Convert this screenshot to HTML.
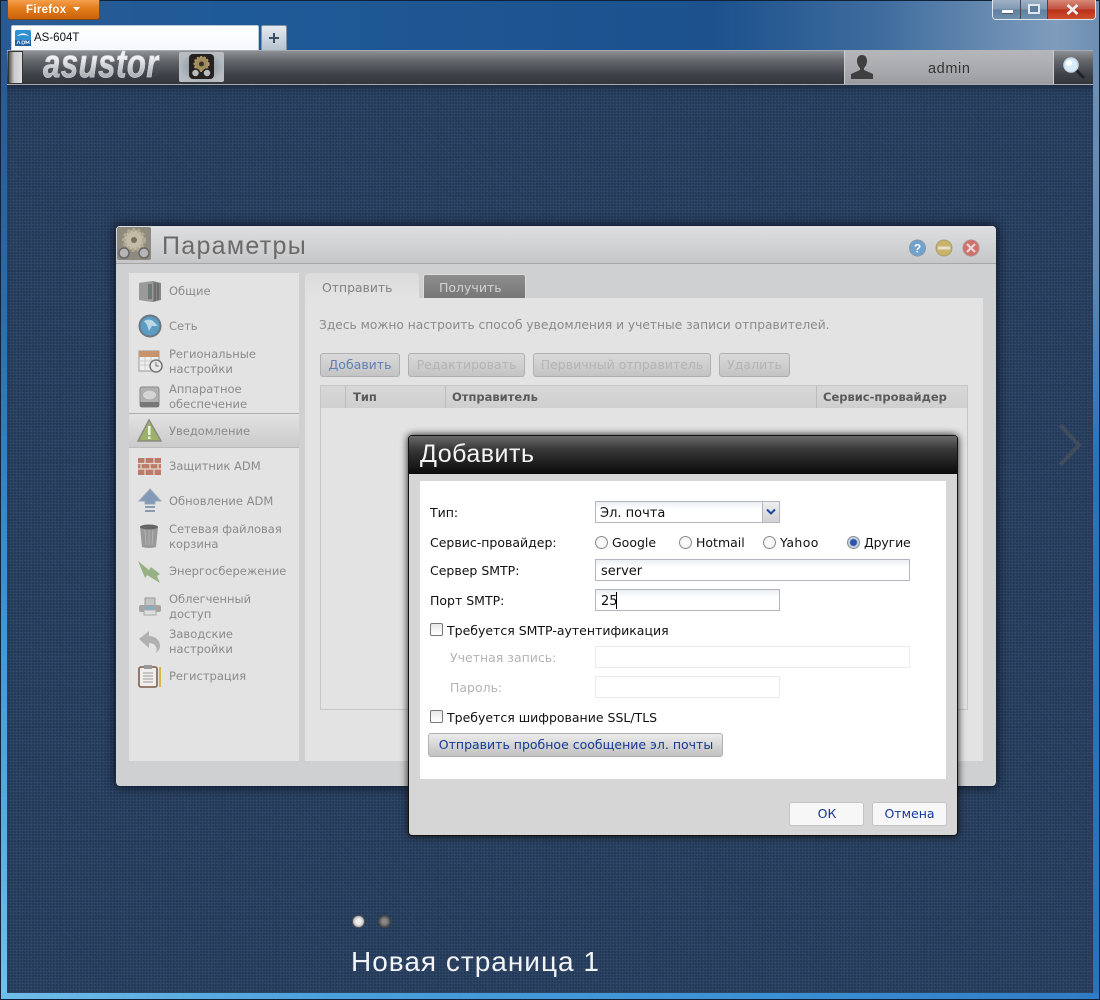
<!DOCTYPE html>
<html lang="ru"><head><meta charset="utf-8"><title>AS-604T</title>
<style>
html,body{margin:0;padding:0}
body{width:1100px;height:1000px;overflow:hidden;position:relative;background:#1b4d87;font-family:"DejaVu Sans","Liberation Sans",sans-serif;font-size:12px}
div,span,svg{position:absolute;box-sizing:border-box}
.t{white-space:nowrap}
.side{color:#8a8a8a;font-size:11.5px;line-height:15px;left:169px;white-space:nowrap}
.lb{color:#111;font-size:12.5px;white-space:nowrap;line-height:16px}
.dis{color:#b4b4b4}
.inp{background:linear-gradient(#eceef1,#fff 7px);border:1px solid #b3b5c6;height:22px;font-size:13px;color:#111;padding:4px 0 0 5px;line-height:16px}
.inpd{background:#fff;border:1px solid #ececec;height:22px}
.btn{height:24px;border:1px solid #b0b0b0;border-radius:3px;background:linear-gradient(#d9d9d9,#c4c4c4);font-size:12.5px;text-align:center;line-height:21px;white-space:nowrap}
.hd{top:386px;height:22px;font-weight:bold;color:#5a5a5a;font-size:11.5px;line-height:22px;white-space:nowrap}
.rad{width:13px;height:13px;border-radius:50%;border:1px solid #8a8a8a;background:radial-gradient(#fff,#eee);top:536px}
.cb{width:13px;height:13px;border:1px solid #777;border-radius:2px;background:linear-gradient(#e8e8e8,#fff);left:430px}
.sv{left:136px;width:28px;height:28px}
</style></head><body>

<!-- glass frame -->
<div style="left:0;top:0;width:1100px;height:1000px;background:linear-gradient(90deg,#2a5a93 0,#1f5a98 20%,#1c518d 65%,#3e6c9e 80%,#7f9cbc 96%,#6d8fb3 100%);border:1px solid #0f2238"></div>
<div style="left:1px;top:85px;width:6px;height:914px;background:linear-gradient(#2a5a93,#2a6aa8 22%,#3f97d6 60%,#72c0ea)"></div>
<div style="left:1093px;top:85px;width:6px;height:914px;background:linear-gradient(#6d8fb3,#5f88b4 20%,#2b74bd 40%,#2a72bc)"></div>
<div style="left:1px;top:993px;width:1098px;height:6px;background:linear-gradient(90deg,#6fbde8,#4aa0dc 30%,#3a90d4 70%,#2f7cc4)"></div>

<!-- Firefox button -->
<div style="left:7px;top:0;width:93px;height:20px;background:linear-gradient(#f4a04c,#e37c1a 45%,#c9610c);border:1px solid #7a4a1c;border-top:0;border-radius:0 0 3px 3px"></div>
<div class="t" style="left:26px;top:2px;color:#fff;font:bold 11.5px/16px 'Liberation Sans',sans-serif;letter-spacing:.3px">Firefox</div>
<svg style="left:72px;top:6px" width="9" height="6"><path d="M1 1h7L4.500 5z" fill="#fff"/></svg>

<!-- window controls -->
<div style="left:992px;top:0;width:104px;height:20px;border:1px solid #dfe8f0;border-top:0;border-radius:0 0 4px 4px;overflow:hidden;background:#445">
 <div style="left:0;top:0;width:27px;height:19px;background:linear-gradient(#9fb2c6 0,#7f98b2 48%,#5f7f9f 52%,#6f8fae)"></div>
 <div style="left:28px;top:0;width:26px;height:19px;background:linear-gradient(#9fb2c6 0,#7f98b2 48%,#5f7f9f 52%,#6f8fae)"></div>
 <div style="left:55px;top:0;width:48px;height:19px;background:linear-gradient(#d98a78 0,#c25040 48%,#b83018 52%,#d05030)"></div>
 <div style="left:9px;top:10px;width:11px;height:4px;background:#fff;border:1px solid #4a5a6a;border-width:0 0 1px 0"></div>
 <div style="left:35px;top:4px;width:12px;height:10px;border:2px solid #dfe6ee;background:#5f7f9f"></div>
 <svg style="left:73px;top:4px" width="13" height="11"><path d="M1.500 1l10 9M11.500 1l-10 9" stroke="#eeeeee" stroke-width="2.800"/></svg>
</div>

<!-- tab -->
<div style="left:11px;top:25px;width:248px;height:25px;background:linear-gradient(#fff,#f6f9fd);border-radius:2px 2px 0 0;border:1px solid #b8c8d8;border-bottom:0"></div>
<svg style="left:15px;top:30px" width="16" height="16"><rect width="16" height="16" rx="2" fill="#2f8fd0"/><rect y="10" width="16" height="6" fill="#1d5f9f"/><path d="M2 6q6-5 12 0q-6-2-12 0z" fill="#fff"/><path d="M2 14l1-3h1l1 3M7 11v3h2l1-2-1-1zM11 14v-3l1.500 2 1.500-2v3" stroke="#fff" fill="none" stroke-width=".8"/></svg>
<div class="t" style="left:34px;top:30px;color:#111;font:11.5px/16px 'Liberation Sans',sans-serif;letter-spacing:0">AS-604T</div>
<div style="left:261px;top:25px;width:26px;height:25px;background:linear-gradient(#e6ebf0,#b5c3d0);border:1px solid #7f93a8;border-bottom:0;border-radius:2px 2px 0 0"></div>
<svg style="left:268px;top:32px" width="12" height="12"><path d="M1 6h10M6 1v10" stroke="#3a4d60" stroke-width="2"/></svg>

<!-- app bar -->
<div style="left:7px;top:50px;width:1086px;height:35px;background:linear-gradient(#8d9094,#62656a 30%,#3c4047 75%,#34373c);border-top:1px solid #a5aab0;border-bottom:1px solid #a8acb0"></div>
<div style="left:8px;top:51px;width:15px;height:33px;background:linear-gradient(90deg,#555 0,#ccc 40%,#ddd 100%);border:1px solid #333"></div>
<div class="t" style="left:43px;top:46px;font:italic bold 40px/36px 'Liberation Sans',sans-serif;letter-spacing:.6px;transform:scaleX(.78);transform-origin:left;background:linear-gradient(#f2f3f4 30%,#b0b4b8 80%);-webkit-background-clip:text;background-clip:text;-webkit-text-fill-color:transparent;-webkit-text-stroke:.6px #cfd2d5">asustor</div>
<div style="left:179px;top:52px;width:45px;height:30px;background:radial-gradient(#6d8296,#b5bbc0 70%,#bcc0c4);border-radius:2px"></div>
<svg style="left:189px;top:54px" width="25" height="25"><rect width="25" height="25" rx="4" fill="#26211c"/><circle cx="12.500" cy="10" r="7" fill="#a08b5c" stroke="#b49e6c" stroke-width="2" stroke-dasharray="2 1.500"/><circle cx="12.500" cy="10" r="2.500" fill="#3a3226"/><circle cx="6.500" cy="19" r="4" fill="#bbb" stroke="#222" stroke-width="1.500"/><circle cx="18" cy="19" r="4" fill="#bbb" stroke="#222" stroke-width="1.500"/></svg>
<div style="left:844px;top:50px;width:210px;height:34px;background:linear-gradient(#b6b7ba,#a9aaae 60%,#9b9ca0);border-left:1px solid #ccc;border-right:1px solid #ccc"></div>
<svg style="left:850px;top:54px" width="24" height="26"><path d="M12 1c3.500 0 5 2.500 5 6s-2 6-3 7v2l9 4v5H1v-5l9-4v-2c-1-1-3-3.500-3-7s1.500-6 5-6z" fill="#3f3f3f"/></svg>
<div class="t" style="left:928px;top:60px;color:#333;font:14.5px/18px 'Liberation Sans',sans-serif;letter-spacing:.6px">admin</div>
<svg style="left:1062px;top:56px" width="24" height="24"><line x1="13" y1="13" x2="22" y2="22" stroke="#222" stroke-width="3"/><circle cx="9" cy="9" r="7" fill="#d8ebf8" stroke="#c9d8e4" stroke-width="1.500"/><circle cx="7" cy="7" r="3" fill="#fff"/></svg>

<!-- wallpaper -->
<div style="left:7px;top:85px;width:1086px;height:908px;background-color:#273f62;background-image:repeating-linear-gradient(0deg,transparent 0 37px,rgba(0,0,0,.05) 37px 38px),repeating-linear-gradient(90deg,transparent 0 53px,rgba(0,0,0,.05) 53px 54px),repeating-linear-gradient(45deg,rgba(255,255,255,.025) 0 1px,transparent 1px 3px),repeating-linear-gradient(0deg,rgba(255,255,255,.025) 0 1px,rgba(0,0,0,.05) 1px 3px),repeating-linear-gradient(90deg,rgba(255,255,255,.025) 0 1px,rgba(0,0,0,.05) 1px 3px);box-shadow:inset 0 8px 8px -6px #16263c"></div>

<!-- chevron -->
<svg style="left:1056px;top:422px" width="26" height="46"><path d="M4 3l19 20L4 43" fill="none" stroke="#414c5c" stroke-width="4"/></svg>

<!-- settings window -->
<div style="left:116px;top:226px;width:880px;height:560px;background:#cfd0d2;border-radius:4px;box-shadow:0 0 10px 2px #0e1a2a"></div>
<div style="left:116px;top:226px;width:880px;height:38px;background:linear-gradient(#dedfe0,#c6c7c9);border-bottom:1px solid #a5a6a8;border-radius:4px 4px 0 0"></div>
<svg style="left:117px;top:227px" width="34" height="33"><rect width="34" height="33" rx="2" fill="#8f8a7f"/><circle cx="17" cy="13" r="10" fill="#c4bca6" stroke="#b0a88f" stroke-width="4" stroke-dasharray="3 2"/><circle cx="17" cy="13" r="3" fill="#746e60"/><circle cx="7" cy="26" r="5" fill="#b5b5b5" stroke="#666" stroke-width="1.500"/><circle cx="27" cy="26" r="5" fill="#b5b5b5" stroke="#666" stroke-width="1.500"/></svg>
<div class="t" style="left:162px;top:231px;color:#6c6a68;font:25px/30px 'Liberation Sans',sans-serif;letter-spacing:1.3px">Параметры</div>
<svg style="left:908px;top:238px" width="72" height="20">
<circle cx="9.500" cy="10" r="8" fill="#6fa3cf" stroke="#8a9aa8"/><text x="9.500" y="14.500" font-size="12" font-weight="bold" font-family="Liberation Sans" fill="#fff" text-anchor="middle">?</text>
<circle cx="36" cy="10" r="8" fill="#c9b368" stroke="#a89e7c"/><rect x="30" y="8.500" width="12" height="3" fill="#e4e0d0"/>
<circle cx="63" cy="10" r="8" fill="#d2706c" stroke="#b28c88"/><path d="M59 6l8 8M67 6l-8 8" stroke="#e8d8d8" stroke-width="2.200"/></svg>

<!-- sidebar -->
<div style="left:129px;top:273px;width:170px;height:488px;background:#e3e3e3"></div>
<div style="left:129px;top:413px;width:170px;height:35px;background:linear-gradient(#e2e2e2,#cbcbcb);border-top:1px solid #aeaeae;border-bottom:1px solid #bbb"></div>

<svg class="sv" style="top:277px" viewBox="0 0 28 28"><path d="M3 6l14-2 8 2v17l-8 2-14-2z" fill="#858585"/><path d="M3 6l14-2v21L3 23z" fill="#9a9a98"/><rect x="12" y="7" width="4" height="15" fill="#6a7a76"/><path d="M19 6v18M22 6v17" stroke="#555"/></svg>
<div class="side" style="top:284px">Общие</div>
<svg class="sv" style="top:312px" viewBox="0 0 28 28"><circle cx="14" cy="14" r="10.500" fill="#5a9cc2" stroke="#6a7680" stroke-width="2"/><path d="M8 9q5-3 9 0l5 5-6 0-3 5-2-6z" fill="#bcd7e6"/></svg>
<div class="side" style="top:319px">Сеть</div>
<svg class="sv" style="top:347px" viewBox="0 0 28 28"><rect x="3" y="4" width="20" height="20" fill="#eee" stroke="#999"/><rect x="3" y="4" width="20" height="6" fill="#c8936a"/><path d="M3 14h20M3 18h20M9 10v14M15 10v14" stroke="#ccc"/><circle cx="20" cy="19" r="6" fill="#e8e8e8" stroke="#777" stroke-width="1.500"/><path d="M20 15v4h3" stroke="#777" fill="none"/></svg>
<div class="side" style="top:347px">Региональные<br>настройки</div>
<svg class="sv" style="top:382px" viewBox="0 0 28 28"><rect x="4" y="5" width="19" height="20" rx="2" fill="#b2b2b2" stroke="#888"/><ellipse cx="13.500" cy="13" rx="7" ry="5" fill="#d4d4d4" stroke="#aaa"/><rect x="4" y="20" width="19" height="5" fill="#777"/></svg>
<div class="side" style="top:382px">Аппаратное<br>обеспечение</div>
<svg class="sv" style="top:417px" viewBox="0 0 28 28"><path d="M13 3L25 24H2z" fill="#9cb26a" stroke="#8a8a80" stroke-width="1.500"/><rect x="12" y="9" width="2.500" height="9" fill="#eef2e0"/><rect x="12" y="19.500" width="2.500" height="2.500" fill="#eef2e0"/></svg>
<div class="side" style="top:424px">Уведомление</div>
<svg class="sv" style="top:452px" viewBox="0 0 28 28"><rect x="2" y="6" width="23" height="17" fill="#bb7b68"/><path d="M2 11.500h23M2 17h23M9 6v5.500M18 6v5.500M5 11.500V17M14 11.500V17M22 11.500V17M9 17v6M18 17v6" stroke="#e8d8d0" stroke-width="1.200"/></svg>
<div class="side" style="top:459px">Защитник ADM</div>
<svg class="sv" style="top:487px" viewBox="0 0 28 28"><path d="M14 2L25 14H19v3H9v-3H3z" fill="#8299b8" stroke="#9aa8b8"/><path d="M9 19h10v2H9zM9 23h10v2H9z" fill="#8a9ab0"/></svg>
<div class="side" style="top:494px">Обновление ADM</div>
<svg class="sv" style="top:522px" viewBox="0 0 28 28"><path d="M4 5q9-3 18 0l-2 20q-7 2-14 0z" fill="#999"/><ellipse cx="13" cy="5" rx="9" ry="2.500" fill="#666"/><path d="M9 8l1 15M13 8v15M17 8l-1 15" stroke="#b4b4b4"/></svg>
<div class="side" style="top:522px">Сетевая файловая<br>корзина</div>
<svg class="sv" style="top:557px" viewBox="0 0 28 28"><path d="M2 4L13 13l2-3 9 7-3 2 3 7-13-8-2 3z" fill="#97b185"/></svg>
<div class="side" style="top:564px">Энергосбережение</div>
<svg class="sv" style="top:592px" viewBox="0 0 28 28"><rect x="9" y="6" width="10" height="8" fill="#c4c4c4" stroke="#999"/><rect x="3" y="13" width="22" height="7" rx="2" fill="#a4a4a4"/><rect x="8" y="18" width="12" height="5" fill="#ddd" stroke="#aaa"/><rect x="10" y="15" width="8" height="2" fill="#7ab2d0"/></svg>
<div class="side" style="top:592px">Облегченный<br>доступ</div>
<svg class="sv" style="top:627px" viewBox="0 0 28 28"><path d="M3 12L13 4v5c6 0 11 4 11 10 0 3-2 6-5 7 2-2 2-4 1-6-1-3-4-4-7-4v5z" fill="#b0b0b0"/></svg>
<div class="side" style="top:627px">Заводские<br>настройки</div>
<svg class="sv" style="top:662px" viewBox="0 0 28 28"><rect x="3" y="5" width="18" height="20" rx="2" fill="#eee" stroke="#8a6d5c" stroke-width="1.800"/><rect x="8" y="3" width="8" height="4" fill="#999"/><path d="M7 11h10M7 14h10M7 17h10M7 20h10" stroke="#999"/><rect x="23" y="5" width="2" height="20" fill="#d8b84c"/></svg>
<div class="side" style="top:669px">Регистрация</div>

<!-- main panel -->
<div style="left:305px;top:298px;width:678px;height:463px;background:#e3e3e3"></div>
<div style="left:305px;top:273px;width:114px;height:26px;background:linear-gradient(#dcdcdc,#e3e3e3);border-radius:4px 4px 0 0"></div>
<div class="t" style="left:322px;top:280px;color:#808080;font-size:12.4px;line-height:15px">Отправить</div>
<div style="left:423px;top:274px;width:103px;height:24px;background:linear-gradient(#8e8e8e,#777);border-radius:3px 3px 0 0;border:1px solid #dcdcdc;border-bottom:0"></div>
<div class="t" style="left:439px;top:280px;color:#d2d2d2;font-size:12.5px;line-height:15px">Получить</div>
<div class="t" style="left:319px;top:318px;color:#8a8a8a;font-size:12.24px;line-height:15px">Здесь можно настроить способ уведомления и учетные записи отправителей.</div>

<div class="btn" style="left:320px;top:353px;width:80px;color:#5f7fb5">Добавить</div>
<div class="btn dis" style="left:408px;top:353px;width:117px">Редактировать</div>
<div class="btn dis" style="left:533px;top:353px;width:178px">Первичный отправитель</div>
<div class="btn dis" style="left:719px;top:353px;width:71px">Удалить</div>

<div style="left:320px;top:385px;width:648px;height:325px;background:#e3e3e3;border:1px solid #c6c6c6"></div>
<div style="left:321px;top:386px;width:646px;height:22px;background:linear-gradient(#d8d8d8,#cfcfcf)"></div>
<div style="left:345px;top:386px;width:1px;height:22px;background:#bdbdbd"></div>
<div style="left:445px;top:386px;width:1px;height:22px;background:#bdbdbd"></div>
<div style="left:816px;top:386px;width:1px;height:22px;background:#bdbdbd"></div>
<div class="hd" style="left:353px">Тип</div>
<div class="hd" style="left:452px">Отправитель</div>
<div class="hd" style="left:823px">Сервис-провайдер</div>

<!-- dialog -->
<div style="left:408px;top:435px;width:550px;height:401px;background:#d6d6d6;border:1px solid #111;border-radius:4px;box-shadow:0 0 8px #111"></div>
<div style="left:409px;top:436px;width:548px;height:38px;background-color:#1a1a1a;background-image:linear-gradient(#6a6a6a,#383838 35%,#0a0a0a);border-radius:3px 3px 0 0"></div>
<div class="t" style="left:420px;top:439px;color:#f4f4f4;font:25px/30px 'Liberation Sans',sans-serif;letter-spacing:.5px">Добавить</div>
<div style="left:420px;top:481px;width:526px;height:298px;background:#fff"></div>

<div class="lb" style="left:430px;top:505px">Тип:</div>
<div class="inp" style="left:595px;top:501px;width:185px;padding-left:4px">Эл. почта</div>
<div style="left:762px;top:502px;width:17px;height:20px;background:linear-gradient(#eee,#d2d2d2);border-left:1px solid #b3b5c6"></div>
<svg style="left:765px;top:508px" width="12" height="8"><path d="M2 1.500L6 5.500l4-4" fill="none" stroke="#1a4aa0" stroke-width="2"/></svg>

<div class="lb" style="left:430px;top:535px">Сервис-провайдер:</div>
<div class="rad" style="left:595px"></div><div class="lb" style="left:612px;top:535px">Google</div>
<div class="rad" style="left:679px"></div><div class="lb" style="left:696px;top:535px">Hotmail</div>
<div class="rad" style="left:763px"></div><div class="lb" style="left:780px;top:535px;letter-spacing:.4px">Yahoo</div>
<div class="rad" style="left:847px;background:radial-gradient(#2a55a8 0 3px,#c0cfe8 4px,#dde)"></div><div class="lb" style="left:864px;top:535px;letter-spacing:-.15px">Другие</div>

<div class="lb" style="left:430px;top:563px">Сервер SMTP:</div>
<div class="inp" style="left:595px;top:559px;width:315px">server</div>
<div class="lb" style="left:430px;top:593px">Порт SMTP:</div>
<div class="inp" style="left:595px;top:589px;width:185px">25</div>
<div style="left:616px;top:592px;width:1px;height:17px;background:#000"></div>

<div class="cb" style="top:623px"></div>
<div class="lb" style="left:447px;top:623px">Требуется SMTP-аутентификация</div>
<div class="lb dis" style="left:450px;top:650px">Учетная запись:</div>
<div class="inpd" style="left:595px;top:646px;width:315px"></div>
<div class="lb dis" style="left:450px;top:680px">Пароль:</div>
<div class="inpd" style="left:595px;top:676px;width:185px"></div>
<div class="cb" style="top:710px"></div>
<div class="lb" style="left:447px;top:710px">Требуется шифрование SSL/TLS</div>
<div class="btn" style="left:428px;top:733px;width:295px;color:#123a96;background:linear-gradient(#ececec,#c0c0c0);padding-left:1px">Отправить пробное сообщение эл. почты</div>

<div class="btn" style="left:789px;top:802px;width:75px;color:#123a96;background:#f7f7f7;border-color:#c4c4c4;padding-left:1px">ОК</div>
<div class="btn" style="left:872px;top:802px;width:75px;color:#123a96;background:#f7f7f7;border-color:#c4c4c4">Отмена</div>

<!-- page dots -->
<div style="left:352px;top:915px;width:13px;height:13px;border-radius:50%;background:radial-gradient(#eee 35%,#aaa 75%,#666);border:1px solid #555"></div>
<div style="left:378px;top:915px;width:13px;height:13px;border-radius:50%;background:radial-gradient(#888 30%,#4a4a4a 75%,#333);border:1px solid #444"></div>
<div class="t" style="left:351px;top:945px;color:#f2f4f7;font:28px/34px 'Liberation Sans',sans-serif;letter-spacing:1px">Новая страница 1</div>
</body></html>
